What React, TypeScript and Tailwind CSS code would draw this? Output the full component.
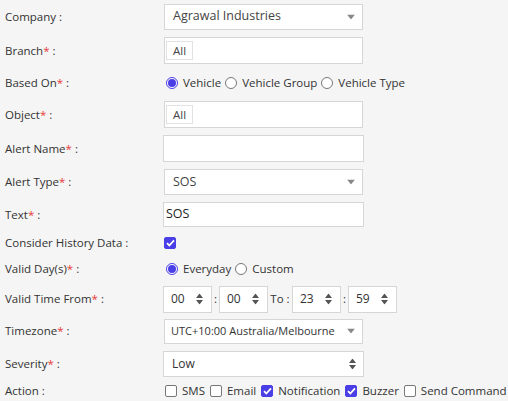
import React from 'react'

const Req = () => <span className="text-[#e53935]">*</span>

function Label({ text, req, w = 'w-[164px]' }: { text: string; req?: boolean; w?: string }) {
  return (
    <div className={`${w} shrink-0 pl-[5px]`}>
      {text}
      {req && <Req />} :
    </div>
  )
}

const Caret = () => (
  <svg width="8" height="5" viewBox="0 0 8 5" className="absolute right-[7px] top-1/2 -translate-y-1/2">
    <path d="M0 0h8L4 5z" fill="#888" />
  </svg>
)

const Updown = ({ right = 'right-[8px]' }: { right?: string }) => (
  <svg width="7" height="11" viewBox="0 0 7 11" className={`absolute ${right} top-1/2 -translate-y-1/2`}>
    <path d="M0 4.5L3.5 0 7 4.5z M0 6.5h7L3.5 11z" fill="#555" />
  </svg>
)

function Radio({ checked, label }: { checked?: boolean; label: string }) {
  return (
    <span className="inline-flex items-center gap-[5px]">
      <span
        className={`w-[12px] h-[12px] rounded-full border flex items-center justify-center bg-white ${
          checked ? 'border-[#4a3ee6]' : 'border-[#777]'
        }`}
      >
        {checked && <span className="w-[8px] h-[8px] rounded-full bg-[#4a3ee6]" />}
      </span>
      {label}
    </span>
  )
}

function Check({ checked, label }: { checked?: boolean; label?: string }) {
  return (
    <span className="inline-flex items-center gap-[5px] whitespace-nowrap">
      <span
        className={`w-[12px] h-[12px] rounded-[2px] border flex items-center justify-center ${
          checked ? 'bg-[#4a3ee6] border-[#4a3ee6]' : 'bg-white border-[#777]'
        }`}
      >
        {checked && (
          <svg width="9" height="8" viewBox="0 0 9 8">
            <path d="M1 4.2l2.3 2.3L8 1.3" stroke="#fff" strokeWidth="1.8" fill="none" />
          </svg>
        )}
      </span>
      {label}
    </span>
  )
}

function TimeBox({ v }: { v: string }) {
  return (
    <div className="relative w-[49px] h-[27px] bg-white border border-[#d6d6d6] flex items-center pl-[7px] text-[12px]">
      {v}
      <Updown />
    </div>
  )
}

export default function App() {
  const box = 'relative bg-white border border-[#d6d6d6] flex items-center'
  return (
    <div
      className="w-[508px] h-[401px] bg-[#f5f5f5] text-[#333] text-[11.5px] overflow-hidden"
      style={{ fontFamily: '"Open Sans", sans-serif' }}
    >
      <div className="flex items-center h-[33px]">
        <Label text="Company" />
        <div className={`${box} w-[199px] h-[26px] pl-[8px] text-[12.5px] text-[#444]`}>
          Agrawal Industries
          <Caret />
        </div>
      </div>

      <div className="flex items-center h-[35px]">
        <Label text="Branch" req />
        <div className={`${box} w-[199px] h-[27px] pl-[1px]`}>
          <span className="border border-[#e2e2e2] px-[6px] h-[19px] flex items-center text-[#444]">All</span>
        </div>
      </div>

      <div className="flex items-center h-[30px]">
        <Label text="Based On" req />
        <div className="flex items-center gap-[4px] pl-[2px]">
          <Radio checked label="Vehicle" />
          <Radio label="Vehicle Group" />
          <Radio label="Vehicle Type" />
        </div>
      </div>

      <div className="flex items-center h-[33px]">
        <Label text="Object" req />
        <div className={`${box} w-[199px] h-[27px] pl-[1px]`}>
          <span className="border border-[#e2e2e2] px-[6px] h-[19px] flex items-center text-[#444]">All</span>
        </div>
      </div>

      <div className="flex items-center h-[35px]">
        <Label text="Alert Name" req w="w-[163px]" />
        <div className={`${box} w-[201px] h-[27px]`} />
      </div>

      <div className="flex items-center h-[32px]">
        <Label text="Alert Type" req />
        <div className={`${box} w-[199px] h-[26px] pl-[8px] text-[12.5px] text-[#444]`}>
          SOS
          <Caret />
        </div>
      </div>

      <div className="flex items-center h-[33px]">
        <Label text="Text" req w="w-[163px]" />
        <div className={`${box} w-[201px] h-[25px] pl-[2px] text-[12.5px] text-[#222]`}>SOS</div>
      </div>

      <div className="flex items-center h-[24px]">
        <Label text="Consider History Data" />
        <Check checked />
      </div>

      <div className="flex items-center h-[28px]">
        <Label text="Valid Day(s)" req />
        <div className="flex items-center gap-[4px] pl-[2px]">
          <Radio checked label="Everyday" />
          <Radio label="Custom" />
        </div>
      </div>

      <div className="flex items-center h-[32px]">
        <Label text="Valid Time From" req w="w-[163px]" />
        <div className="flex items-center">
          <TimeBox v="00" />
          <span className="w-[7px] text-center">:</span>
          <TimeBox v="00" />
          <span className="w-[24px] text-center">To :</span>
          <TimeBox v="23" />
          <span className="w-[7px] text-center">:</span>
          <TimeBox v="59" />
        </div>
      </div>

      <div className="flex items-center h-[32px]">
        <Label text="Timezone" req />
        <div className={`${box} w-[199px] h-[25px] pl-[6px] text-[11px] text-[#333]`}>
          UTC+10:00 Australia/Melbourne
          <Caret />
        </div>
      </div>

      <div className="flex items-center h-[34px]">
        <Label text="Severity" req w="w-[163px]" />
        <div className={`${box} w-[201px] h-[26px] pl-[8px] text-[12px] text-[#333]`}>
          Low
          <Updown right="right-[7px]" />
        </div>
      </div>

      <div className="flex items-center h-[20px]">
        <Label text="Action" />
        <div className="flex items-center gap-[5px] pl-[1px]">
          <Check label="SMS" />
          <Check label="Email" />
          <Check checked label="Notification" />
          <Check checked label="Buzzer" />
          <Check label="Send Command" />
        </div>
      </div>
    </div>
  )
}
